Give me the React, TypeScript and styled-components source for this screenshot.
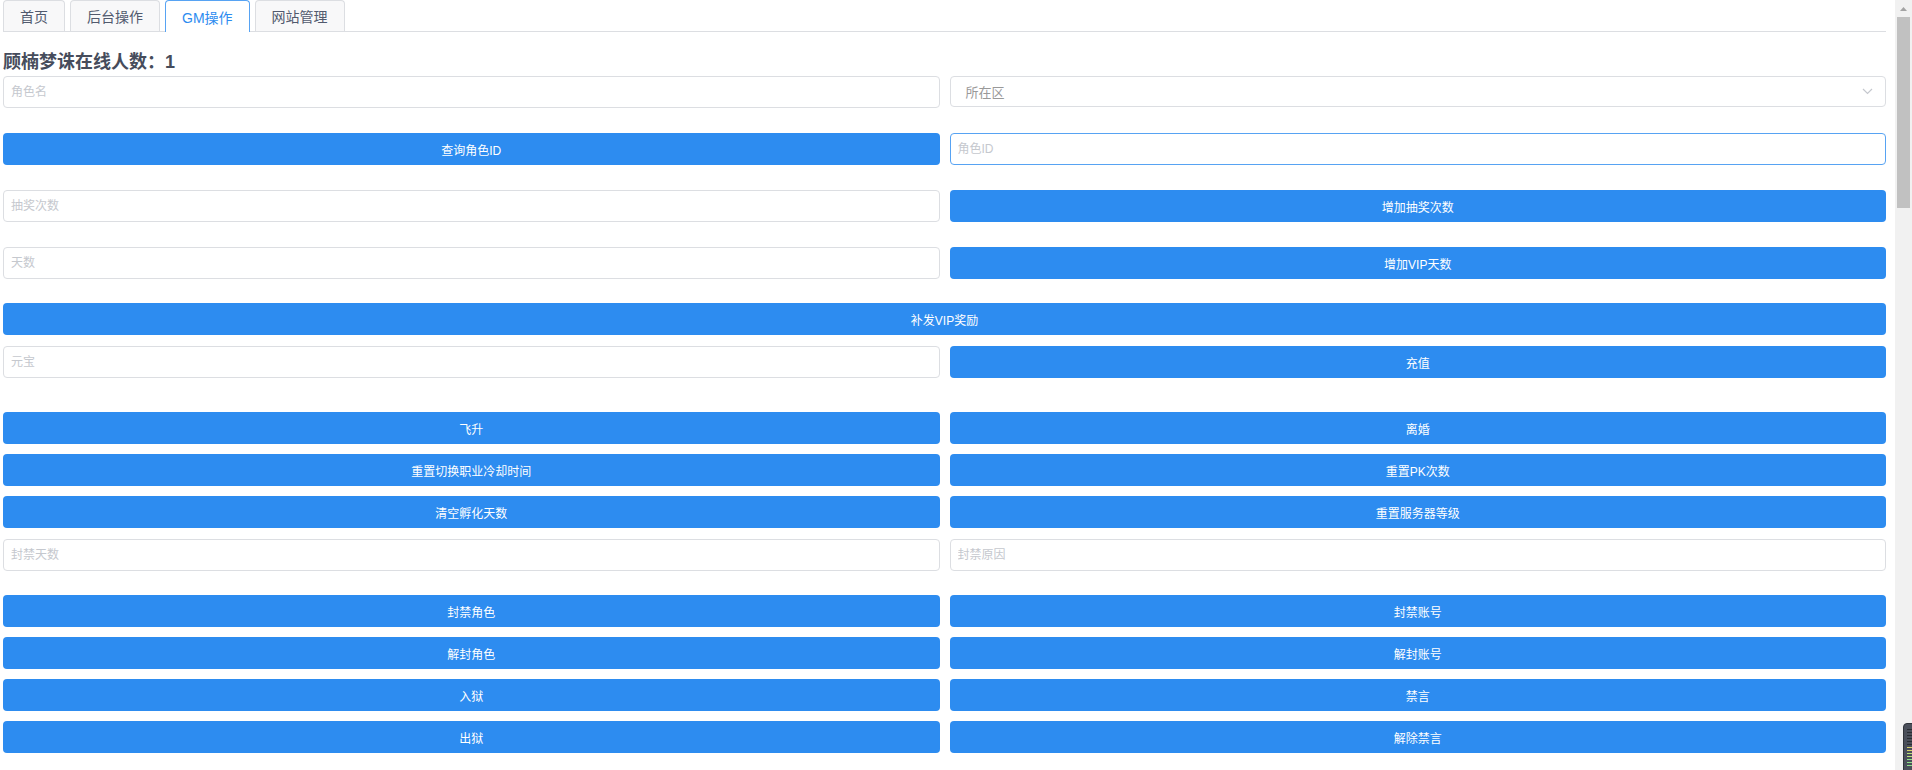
import styled, { createGlobalStyle } from "styled-components";

const GlobalStyle = createGlobalStyle`
  html, body {
    margin: 0;
    padding: 0;
    background: #fff;
  }
  body {
    font-family: "Liberation Sans", "Noto Sans CJK SC", sans-serif;
    font-size: 12px;
    color: #515a6e;
  }
`;

const Page = styled.div`
  padding: 0 26px 0 3px;
  min-height: 2967px;
  box-sizing: border-box;
`;

const TabBar = styled.div`
  display: flex;
  gap: 5px;
  height: 31px;
  border-bottom: 1px solid #dcdee2;
`;

const Tab = styled.div<{ $active?: boolean }>`
  box-sizing: border-box;
  padding: 0 16px;
  display: flex;
  align-items: center;
  font-size: 14px;
  border: 1px solid ${(p) => (p.$active ? "#57a3f3" : "#dcdee2")};
  border-bottom: none;
  border-radius: 4px 4px 0 0;
  background: ${(p) => (p.$active ? "#fff" : "#f8f8f9")};
  color: ${(p) => (p.$active ? "#2d8cf0" : "#515a6e")};
  margin-bottom: ${(p) => (p.$active ? "-1px" : "0")};
  height: ${(p) => (p.$active ? "32px" : "31px")};
`;

const Title = styled.h3`
  margin: 18px 0 2px;
  font-size: 18px;
  line-height: 24px;
  font-weight: 700;
  color: #464c5b;
`;

const Row = styled.div<{ $top: number; $single?: boolean }>`
  display: grid;
  grid-template-columns: ${(p) => (p.$single ? "1fr" : "1fr 1fr")};
  column-gap: 10px;
  margin-top: ${(p) => p.$top}px;
`;

const Field = styled.input<{ $focused?: boolean }>`
  height: 32px;
  box-sizing: border-box;
  width: 100%;
  padding: 0 7px;
  border: 1px solid ${(p) => (p.$focused ? "#57a3f3" : "#dcdee2")};
  border-radius: 4px;
  font-family: inherit;
  font-size: 12px;
  color: #515a6e;
  outline: none;
  &::placeholder {
    color: #c5c8ce;
  }
`;

const SelectBox = styled.div`
  height: 31px;
  box-sizing: border-box;
  border: 1px solid #dcdee2;
  border-radius: 4px;
  display: flex;
  align-items: center;
  justify-content: space-between;
  padding: 0 12px 0 15px;
  font-size: 13px;
  color: #999;
`;

const Chevron = styled.svg`
  width: 11px;
  height: 7px;
  display: block;
`;

const ActionButton = styled.button`
  height: 32px;
  width: 100%;
  border: none;
  border-radius: 4px;
  background: #2d8cf0;
  color: #fff;
  font-family: inherit;
  font-size: 12px;
  cursor: pointer;
`;

/* browser scrollbar as drawn in the screenshot */
const ScrollRail = styled.div`
  position: fixed;
  top: 0;
  right: 0;
  width: 17px;
  height: 100vh;
  background: #f1f1f1;
  display: flex;
  flex-direction: column;
  align-items: center;
`;

const ScrollArrow = styled.div`
  height: 17px;
  width: 17px;
  display: flex;
  align-items: center;
  justify-content: center;
`;

const ScrollThumb = styled.div`
  width: 13px;
  height: 191px;
  background: #c1c1c1;
`;

const Gadget = styled.div`
  position: fixed;
  left: 1903px;
  top: 723px;
  width: 30px;
  height: 60px;
  border-radius: 4px;
  background: #4a4f5a;
  border: 1px solid #2f333a;
  box-sizing: border-box;
  padding: 5px 3px;
  display: flex;
  flex-direction: column;
  gap: 2px;
  z-index: 10;
`;

const GadgetBar = styled.div<{ $color: string }>`
  height: 1px;
  width: 5px;
  background: ${(p) => p.$color};
`;

const gadgetBars = [
  "#2a2d33", "#2a2d33", "#2a2d33", "#2a2d33", "#2a2d33",
  "#2a2d33", "#d7d26a", "#d7d26a", "#b9e07a", "#b9e07a",
  "#8fe08a", "#8fe08a", "#8fe08a",
];

type Cell =
  | { kind: "input"; text: string; focused?: boolean }
  | { kind: "button"; text: string }
  | { kind: "select"; text: string };

const rows: { top: number; cells: Cell[] }[] = [
  { top: 0, cells: [{ kind: "input", text: "角色名" }, { kind: "select", text: "所在区" }] },
  { top: 25, cells: [{ kind: "button", text: "查询角色ID" }, { kind: "input", text: "角色ID", focused: true }] },
  { top: 25, cells: [{ kind: "input", text: "抽奖次数" }, { kind: "button", text: "增加抽奖次数" }] },
  { top: 25, cells: [{ kind: "input", text: "天数" }, { kind: "button", text: "增加VIP天数" }] },
  { top: 24, cells: [{ kind: "button", text: "补发VIP奖励" }] },
  { top: 11, cells: [{ kind: "input", text: "元宝" }, { kind: "button", text: "充值" }] },
  { top: 34, cells: [{ kind: "button", text: "飞升" }, { kind: "button", text: "离婚" }] },
  { top: 10, cells: [{ kind: "button", text: "重置切换职业冷却时间" }, { kind: "button", text: "重置PK次数" }] },
  { top: 10, cells: [{ kind: "button", text: "清空孵化天数" }, { kind: "button", text: "重置服务器等级" }] },
  { top: 11, cells: [{ kind: "input", text: "封禁天数" }, { kind: "input", text: "封禁原因" }] },
  { top: 24, cells: [{ kind: "button", text: "封禁角色" }, { kind: "button", text: "封禁账号" }] },
  { top: 10, cells: [{ kind: "button", text: "解封角色" }, { kind: "button", text: "解封账号" }] },
  { top: 10, cells: [{ kind: "button", text: "入狱" }, { kind: "button", text: "禁言" }] },
  { top: 10, cells: [{ kind: "button", text: "出狱" }, { kind: "button", text: "解除禁言" }] },
];

function renderCell(cell: Cell, key: number) {
  if (cell.kind === "button") {
    return <ActionButton key={key}>{cell.text}</ActionButton>;
  }
  if (cell.kind === "select") {
    return (
      <SelectBox key={key}>
        <span>{cell.text}</span>
        <Chevron viewBox="0 0 11 7">
          <path d="M1 1l4.5 4.5L10 1" fill="none" stroke="#c5c8ce" strokeWidth="1.2" />
        </Chevron>
      </SelectBox>
    );
  }
  return <Field key={key} placeholder={cell.text} $focused={cell.focused} />;
}

function App() {
  const tabs = ["首页", "后台操作", "GM操作", "网站管理"];

  return (
    <>
      <GlobalStyle />
      <Page>
        <TabBar>
          {tabs.map((t) => (
            <Tab key={t} $active={t === "GM操作"}>
              {t}
            </Tab>
          ))}
        </TabBar>
        <Title>顾楠梦诛在线人数：1</Title>
        {rows.map((row, i) => (
          <Row key={i} $top={row.top} $single={row.cells.length === 1}>
            {row.cells.map((c, j) => renderCell(c, j))}
          </Row>
        ))}
      </Page>
      <ScrollRail>
        <ScrollArrow>
          <svg width="7" height="4" viewBox="0 0 7 4">
            <path d="M0 4L3.5 0L7 4Z" fill="#a3a3a3" />
          </svg>
        </ScrollArrow>
        <ScrollThumb />
      </ScrollRail>
      <Gadget>
        {gadgetBars.map((c, i) => (
          <GadgetBar key={i} $color={c} />
        ))}
      </Gadget>
    </>
  );
}

export default App;
